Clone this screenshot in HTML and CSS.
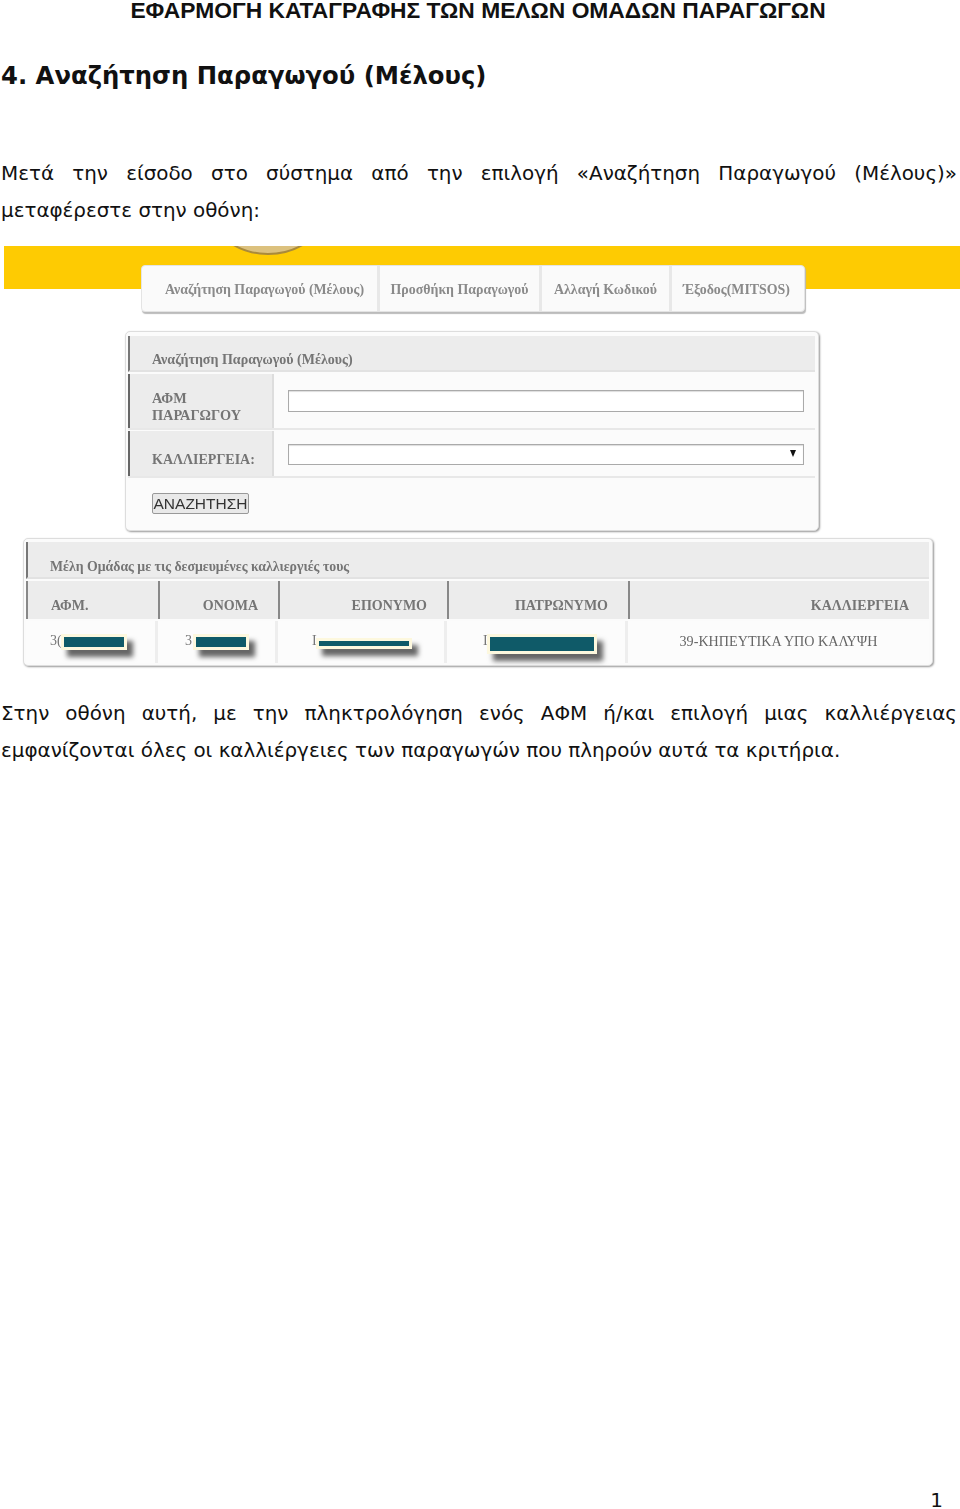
FILE: index.html
```html
<!DOCTYPE html>
<html lang="en">
<head>
    <meta charset="UTF-8">
    <meta name="viewport" content="width=device-width, initial-scale=1.0">
    <title>Εφαρμογή καταγραφής</title>
    <link rel="stylesheet" href="styles.css">
</head>
<body>

<header class="doc-title">ΕΦΑΡΜΟΓΗ ΚΑΤΑΓΡΑΦΗΣ ΤΩΝ ΜΕΛΩΝ ΟΜΑΔΩΝ ΠΑΡΑΓΩΓΩΝ</header>

<h2 class="section-title">4. Αναζήτηση Παραγωγού (Μέλους)</h2>

<p class="doc-text intro">Μετά την είσοδο στο σύστημα από την επιλογή «Αναζήτηση Παραγωγού (Μέλους)» μεταφέρεστε στην οθόνη:</p>

<!-- Screenshot of the application -->
<div class="shot">
    <div class="top-band">
        <div class="seal"></div>
    </div>

    <nav class="menu">
        <a class="menu-item item-search">Αναζήτηση Παραγωγού (Μέλους)</a>
        <a class="menu-item item-add">Προσθήκη Παραγωγού</a>
        <a class="menu-item item-pass">Αλλαγή Κωδικού</a>
        <a class="menu-item item-exit">Έξοδος(MITSOS)</a>
    </nav>

    <div class="panel search-panel">
        <div class="panel-head">Αναζήτηση Παραγωγού (Μέλους)</div>
        <div class="form-row row-afm">
            <div class="form-label">ΑΦΜ<br>ΠΑΡΑΓΩΓΟΥ</div>
            <div class="form-field"><div class="text-box"></div></div>
        </div>
        <div class="form-row row-crop">
            <div class="form-label label-crop">ΚΑΛΛΙΕΡΓΕΙΑ:</div>
            <div class="form-field"><div class="text-box select-box"><span class="arrow"></span></div></div>
        </div>
        <div class="form-actions"><button class="search-btn">ΑΝΑΖΗΤΗΣΗ</button></div>
    </div>

    <div class="panel results-panel">
        <div class="panel-head results-head">Μέλη Ομάδας με τις δεσμευμένες καλλιεργιές τους</div>
        <div class="results-grid">
            <div class="col-head head-afm">ΑΦΜ.</div>
            <div class="col-head head-name">ΟΝΟΜΑ</div>
            <div class="col-head head-surname">ΕΠΟΝΥΜΟ</div>
            <div class="col-head head-father">ΠΑΤΡΩΝΥΜΟ</div>
            <div class="col-head head-crop">ΚΑΛΛΙΕΡΓΕΙΑ</div>

            <div class="cell cell-afm">3(<span class="mask mask-afm"></span></div>
            <div class="cell cell-name">3<span class="mask mask-name"></span></div>
            <div class="cell cell-surname">Ι<span class="mask mask-surname"></span></div>
            <div class="cell cell-father">Ι<span class="mask mask-father"></span></div>
            <div class="cell cell-crop">39-ΚΗΠΕΥΤΙΚΑ ΥΠΟ ΚΑΛΥΨΗ</div>
        </div>
    </div>
</div>

<p class="doc-text outro">Στην οθόνη αυτή, με την πληκτρολόγηση ενός ΑΦΜ ή/και επιλογή μιας καλλιέργειας εμφανίζονται όλες οι καλλιέργειες των παραγωγών που πληρούν αυτά τα κριτήρια.</p>

<footer class="page-num">1</footer>

</body>
</html>
```

FILE: styles.css
```css
* {
    box-sizing: border-box;
}
body {
    margin: 0;
    height: 1509px;
    display: flex;
    flex-direction: column;
    background: #fff;
    color: #111;
    font-family: "DejaVu Sans", sans-serif;
    overflow: hidden;
}
.doc-title {
    font-family: "Liberation Sans", sans-serif;
    font-weight: bold;
    font-size: 22.8px;
    line-height: 24px;
    text-align: center;
    padding-right: 4px;
    margin-top: -2px;
}
.section-title {
    font-size: 24.3px;
    line-height: 30px;
    font-weight: bold;
    margin: 39px 0 0 1px;
}
.doc-text {
    font-size: 19.9px;
    line-height: 37px;
    text-align: justify;
    margin: 0 3px 0 1px;
}
.intro {
    margin-top: 64px;
}

/* screenshot */
.shot {
    margin: 17px 0 0 4px;
    height: 422px;
    display: flex;
    flex-direction: column;
    align-items: flex-start;
    font-family: "Liberation Serif", serif;
    font-weight: bold;
    color: #757575;
    filter: blur(0.5px);
}
.top-band {
    width: 956px;
    height: 43px;
    background: #fecb02;
    display: flex;
    justify-content: center;
    overflow: hidden;
    padding-right: 428px;
}
.seal {
    width: 140px;
    height: 140px;
    flex: none;
    margin-top: -131px;
    border-radius: 50%;
    background: #dcc17e;
    border: 2px solid #a98a3c;
}
.menu {
    margin: -24px 0 0 137px;
    width: 664px;
    height: 47px;
    display: flex;
    background: #fafafa;
    border-radius: 4px;
    border: 1px solid #e4e4e4;
    box-shadow: 1px 2px 1px #bbb;
    font-size: 13.9px;
    color: #8a8a8a;
}
.menu-item {
    display: flex;
    align-items: center;
    justify-content: center;
    border-right: 3px solid #e8e8e8;
    padding-top: 2px;
}
.menu-item:last-child {
    border-right: 0;
}
.item-search { width: 238px; padding-left: 10px; }
.item-add { width: 162px; }
.item-pass { width: 130px; }
.item-exit { flex: 1; padding-right: 3px; }

.panel {
    background: #fbfbfb;
    border: 1px solid #ddd;
    border-radius: 5px;
    box-shadow: 1px 1px 2px #999;
    padding: 4px 3px 0 2px;
}
.panel-head {
    background: #ececec;
    border-left: 2px solid #777;
    border-bottom: 2px solid #e2e2e2;
    font-size: 14px;
    padding-left: 22px;
    display: flex;
    align-items: center;
}
.search-panel {
    margin: 19px 0 0 121px;
    width: 694px;
    height: 200px;
}
.search-panel .panel-head {
    height: 36px;
    padding-top: 14px;
}
.form-row {
    display: flex;
    border-bottom: 2px solid #e8e8e8;
}
.row-afm { height: 56px; margin-top: 2px; }
.row-crop { height: 47px; margin-top: 1px; }
.form-label {
    width: 146px;
    background: #ececec;
    border-left: 2px solid #666;
    border-right: 2px solid #ddd;
    padding: 16px 0 0 22px;
    font-size: 14.3px;
    line-height: 17px;
}
.label-crop {
    padding-top: 20px;
    font-size: 14px;
}
.form-field {
    flex: 1;
    padding: 16px 11px 0 14px;
}
.text-box {
    height: 22px;
    background: #fff;
    border: 1px solid #aaa;
    box-shadow: inset 0 1px 1px #ddd;
    display: flex;
    align-items: center;
    justify-content: flex-end;
    padding-right: 7px;
}
.row-crop .form-field {
    padding-top: 13px;
}
.select-box {
    height: 21px;
}
.arrow {
    width: 0;
    height: 0;
    border-left: 3.5px solid transparent;
    border-right: 3.5px solid transparent;
    border-top: 7px solid #111;
    margin-bottom: 2px;
}
.form-actions {
    padding: 15px 0 0 24px;
}
.search-btn {
    display: block;
    height: 21px;
    width: 97px;
    padding: 0;
    border: 1px solid #999;
    border-radius: 2px;
    background: #e9e9e9;
    color: #333;
    font-family: "Liberation Sans", sans-serif;
    font-size: 15.5px;
    line-height: 19px;
}

.results-panel {
    margin: 7px 0 0 19px;
    width: 910px;
    height: 128px;
    padding-top: 3px;
}
.results-head {
    height: 37px;
    padding-top: 14px;
    font-size: 13.8px;
}
.results-grid {
    display: grid;
    grid-template-columns: 132px 120px 169px 181px 1fr;
    grid-template-rows: 38px 42px;
    row-gap: 2px;
    margin-top: 2px;
}
.col-head {
    background: #ececec;
    border-left: 2px solid #888;
    font-size: 14px;
    padding: 17px 20px 0 0;
    text-align: right;
}
.head-afm {
    text-align: left;
    padding-left: 23px;
}
.cell {
    position: relative;
    background: #fcfcfc;
    border-right: 3px solid #eee;
    padding-top: 12px;
    font-weight: normal;
    font-size: 14px;
    color: #777;
}
.cell-afm { padding-left: 24px; }
.cell-name { padding-left: 27px; }
.cell-surname { padding-left: 34px; }
.cell-father { padding-left: 36px; }
.cell-crop {
    border-right: 0;
    text-align: center;
    font-size: 14.15px;
    color: #666;
}
/* bars that hide personal data, they sit over the cell text */
.mask {
    position: absolute;
    background: #0f5a68;
    border: 3px solid #fdf8de;
    box-shadow: 6px 7px 5px #666;
}
.mask-afm { left: 35px; top: 13px; width: 66px; height: 16px; }
.mask-name { left: 35px; top: 13px; width: 56px; height: 16px; }
.mask-surname { left: 38px; top: 17px; width: 96px; height: 11px; }
.mask-father { left: 40px; top: 13px; width: 110px; height: 20px; }

.outro {
    margin-top: 27px;
}
.page-num {
    margin-top: auto;
    margin-bottom: -1px;
    font-size: 20px;
    line-height: 20px;
    text-align: right;
    padding-right: 17px;
}
```
